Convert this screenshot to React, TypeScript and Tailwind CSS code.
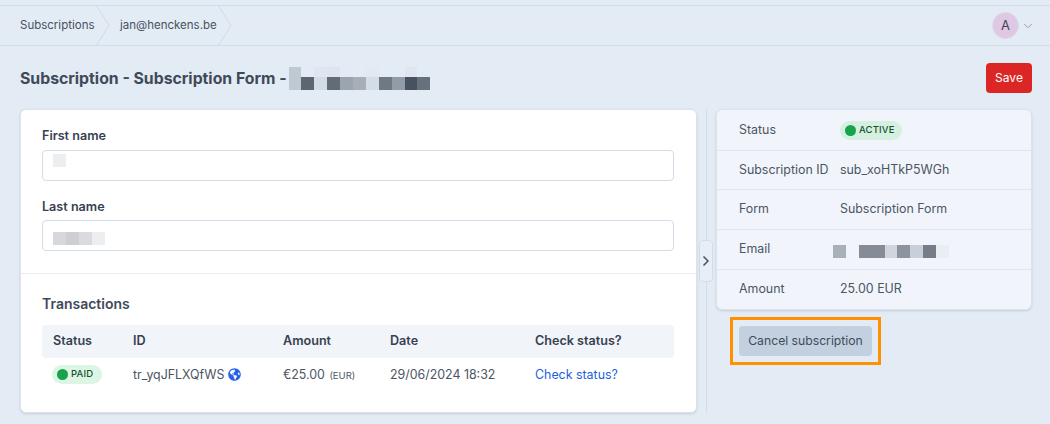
import React from 'react';
import { FaGlobeAmericas } from 'react-icons/fa';
import { ChevronDown, ChevronRight } from 'lucide-react';

const titleTop = ['#c0c8d2', '#e3ebf5', '#dfe6ef', '#dde5ee', '#e3ebf5', '#e3ebf5', '#e1e9f2', '#e3ebf5', '#e3ebf5', '#dfe6ef', '#e3ebf5'];
const titleBottom = ['#c0c8d2', '#5a6672', '#d3dbe4', '#626c78', '#9ca5af', '#a6afb8', '#d4dce5', '#6f7984', '#939ca6', '#46525f', '#67717d'];
const emailBlocks = ['#a9b0b8', '#f1f5fb', '#858c96', '#858c96', '#d0d5de', '#8e949d', '#c9cfd7', '#767d88', '#e9edf4'];
const firstName = ['#edeef0'];
const lastName = ['#d6d8db', '#cdcfd3', '#d9dbde', '#edeef0'];

const Pixels = ({ colors }: { colors: string[] }) => (
  <div className="flex">
    {colors.map((c, i) => (
      <div key={i} className="w-[12.9px] h-[13px]" style={{ backgroundColor: c }} />
    ))}
  </div>
);

const Crumb = ({ label, width }: { label: string; width: string }) => (
  <div className={`flex items-center justify-between h-full ${width}`}>
    <span>{label}</span>
    <svg width="14" height="39" viewBox="0 0 14 39" fill="none" className="shrink-0">
      <path d="M0.5 0L13 19.5L0.5 39" stroke="#cfd9e5" strokeWidth="1" />
    </svg>
  </div>
);

const Badge = ({ label, bg, width }: { label: string; bg: string; width: string }) => (
  <span className={`inline-flex items-center h-[19px] rounded-full pl-[5px] gap-[3px] text-[9.5px] font-medium tracking-[0.15px] text-[#14532d] ${bg} ${width}`}>
    <span className="w-[11px] h-[11px] rounded-full bg-[#16a34a]" />
    {label}
  </span>
);

const InfoRow = ({ label, last, children }: { label: string; last?: boolean; children: React.ReactNode }) => (
  <div className={`flex items-center h-[39.7px] pl-[22px] ${last ? '' : 'border-b border-[#dfe6ef]'}`}>
    <div className="w-[101px] text-[#4b5563]">{label}</div>
    {children}
  </div>
);

const App = () => {
  return (
    <div
      className="w-[1050px] h-[424px] overflow-hidden bg-[#e3ebf5] text-[12.4px] text-[#374151] pt-[5px]"
      style={{ fontFamily: 'Inter, "Liberation Sans", sans-serif' }}
    >
      <div className="flex items-center justify-between h-[41px] border-y border-[#d3dde9] pl-5 pr-[15px]">
        <div className="flex items-center h-full text-[#475261] text-[11.5px]">
          <Crumb label="Subscriptions" width="w-[90px]" />
          <div className="pl-[10px]">
            <Crumb label="jan@henckens.be" width="w-[112px]" />
          </div>
        </div>
        <div className="flex items-center gap-[2px]">
          <div className="w-[27px] h-[27px] rounded-full bg-[#e0c8e4] border border-[#d8dde8] flex items-center justify-center text-[13px] text-[#3f4654]">
            A
          </div>
          <ChevronDown size={14} strokeWidth={1.5} className="text-[#8c95a2]" />
        </div>
      </div>

      <div className="flex items-center justify-between h-[63px] pt-px pl-5 pr-[18px]">
        <div className="flex items-center gap-[2px] mt-px">
          <h1 className="text-[15.8px] font-bold text-[#3f4a58]">Subscription - Subscription Form -</h1>
          <div className="flex flex-col">
            <div className="flex h-[10px] overflow-hidden">
              <Pixels colors={titleTop} />
            </div>
            <Pixels colors={titleBottom} />
          </div>
        </div>
        <button className="w-[46px] h-[30px] rounded bg-[#dc2626] text-white text-[12px]">Save</button>
      </div>

      <div className="relative flex items-start pl-5">
        <div className="w-[677px] h-[304px] bg-white rounded-md border border-[#dbe3ed] shadow-sm">
          <div className="pl-[21px] pr-[22px] pt-[18px] h-[164px] border-b border-[#e8edf3]">
            <label className="block font-semibold text-[12.6px] leading-[16px]">First name</label>
            <div className="h-[31px] mt-[6px] rounded border border-[#d3dde9] pl-[10px] pt-[3px]">
              <Pixels colors={firstName} />
            </div>
            <label className="block font-semibold text-[12.6px] leading-[16px] mt-[18px]">Last name</label>
            <div className="h-[31px] mt-[5px] rounded border border-[#d3dde9] pl-[10px] pt-[11px]">
              <Pixels colors={lastName} />
            </div>
          </div>
          <div className="pl-[21px] pr-[22px] pt-[20px]">
            <h2 className="text-[14px] font-semibold leading-[20px] text-[#3f4a58]">Transactions</h2>
            <div className="grid grid-cols-[80px_150px_107px_145px_1fr] items-center h-[33px] mt-[11px] pl-[11px] bg-[#f1f5f9] rounded-sm font-semibold text-[12.6px]">
              <span>Status</span>
              <span>ID</span>
              <span>Amount</span>
              <span>Date</span>
              <span>Check status?</span>
            </div>
            <div className="grid grid-cols-[80px_150px_107px_145px_1fr] items-center h-[34px] pl-[11px] text-[#4b5563]">
              <span className="-ml-px">
                <Badge label="PAID" bg="bg-[#dcf5e4]" width="w-[50px]" />
              </span>
              <span className="flex items-center gap-[4px]">
                tr_yqJFLXQfWS
                <FaGlobeAmericas size={13} className="text-[#2563eb]" />
              </span>
              <span>
                €25.00 <span className="text-[9.5px] ml-[1px]">(EUR)</span>
              </span>
              <span>29/06/2024 18:32</span>
              <span className="text-[#1d5fe0]">Check status?</span>
            </div>
          </div>
        </div>

        <div className="w-[19px] h-[304px] flex justify-center">
          <div className="w-px h-full bg-[#d3dde9]" />
        </div>

        <div className="w-[316px]">
          <div className="bg-[#f1f5fb] rounded-md border border-[#dbe3ed] shadow-sm text-[#4b5563] pt-px">
            <InfoRow label="Status">
              <Badge label="ACTIVE" bg="bg-[#d5f0e0]" width="w-[62px]" />
            </InfoRow>
            <InfoRow label="Subscription ID">sub_xoHTkP5WGh</InfoRow>
            <InfoRow label="Form">Subscription Form</InfoRow>
            <InfoRow label="Email">
              <div className="-ml-[7px] mt-[4px]">
                <Pixels colors={emailBlocks} />
              </div>
            </InfoRow>
            <InfoRow label="Amount" last>
              25.00 EUR
            </InfoRow>
          </div>
          <div className="w-[151px] h-[48px] mt-[7px] ml-[14px] border-[3px] border-[#ff9000] flex items-center justify-center">
            <button className="w-[133px] h-[30px] rounded bg-[#c3d0e0] text-[#414b59] text-[12.2px]">Cancel subscription</button>
          </div>
        </div>

        <button className="absolute left-[699px] top-[131px] w-[14px] h-[42px] bg-[#e8eef6] border border-[#d3dde9] rounded flex items-center justify-center">
          <ChevronRight size={16} strokeWidth={2.5} className="text-[#4b5563] shrink-0" />
        </button>
      </div>
    </div>
  );
};

export default App;
